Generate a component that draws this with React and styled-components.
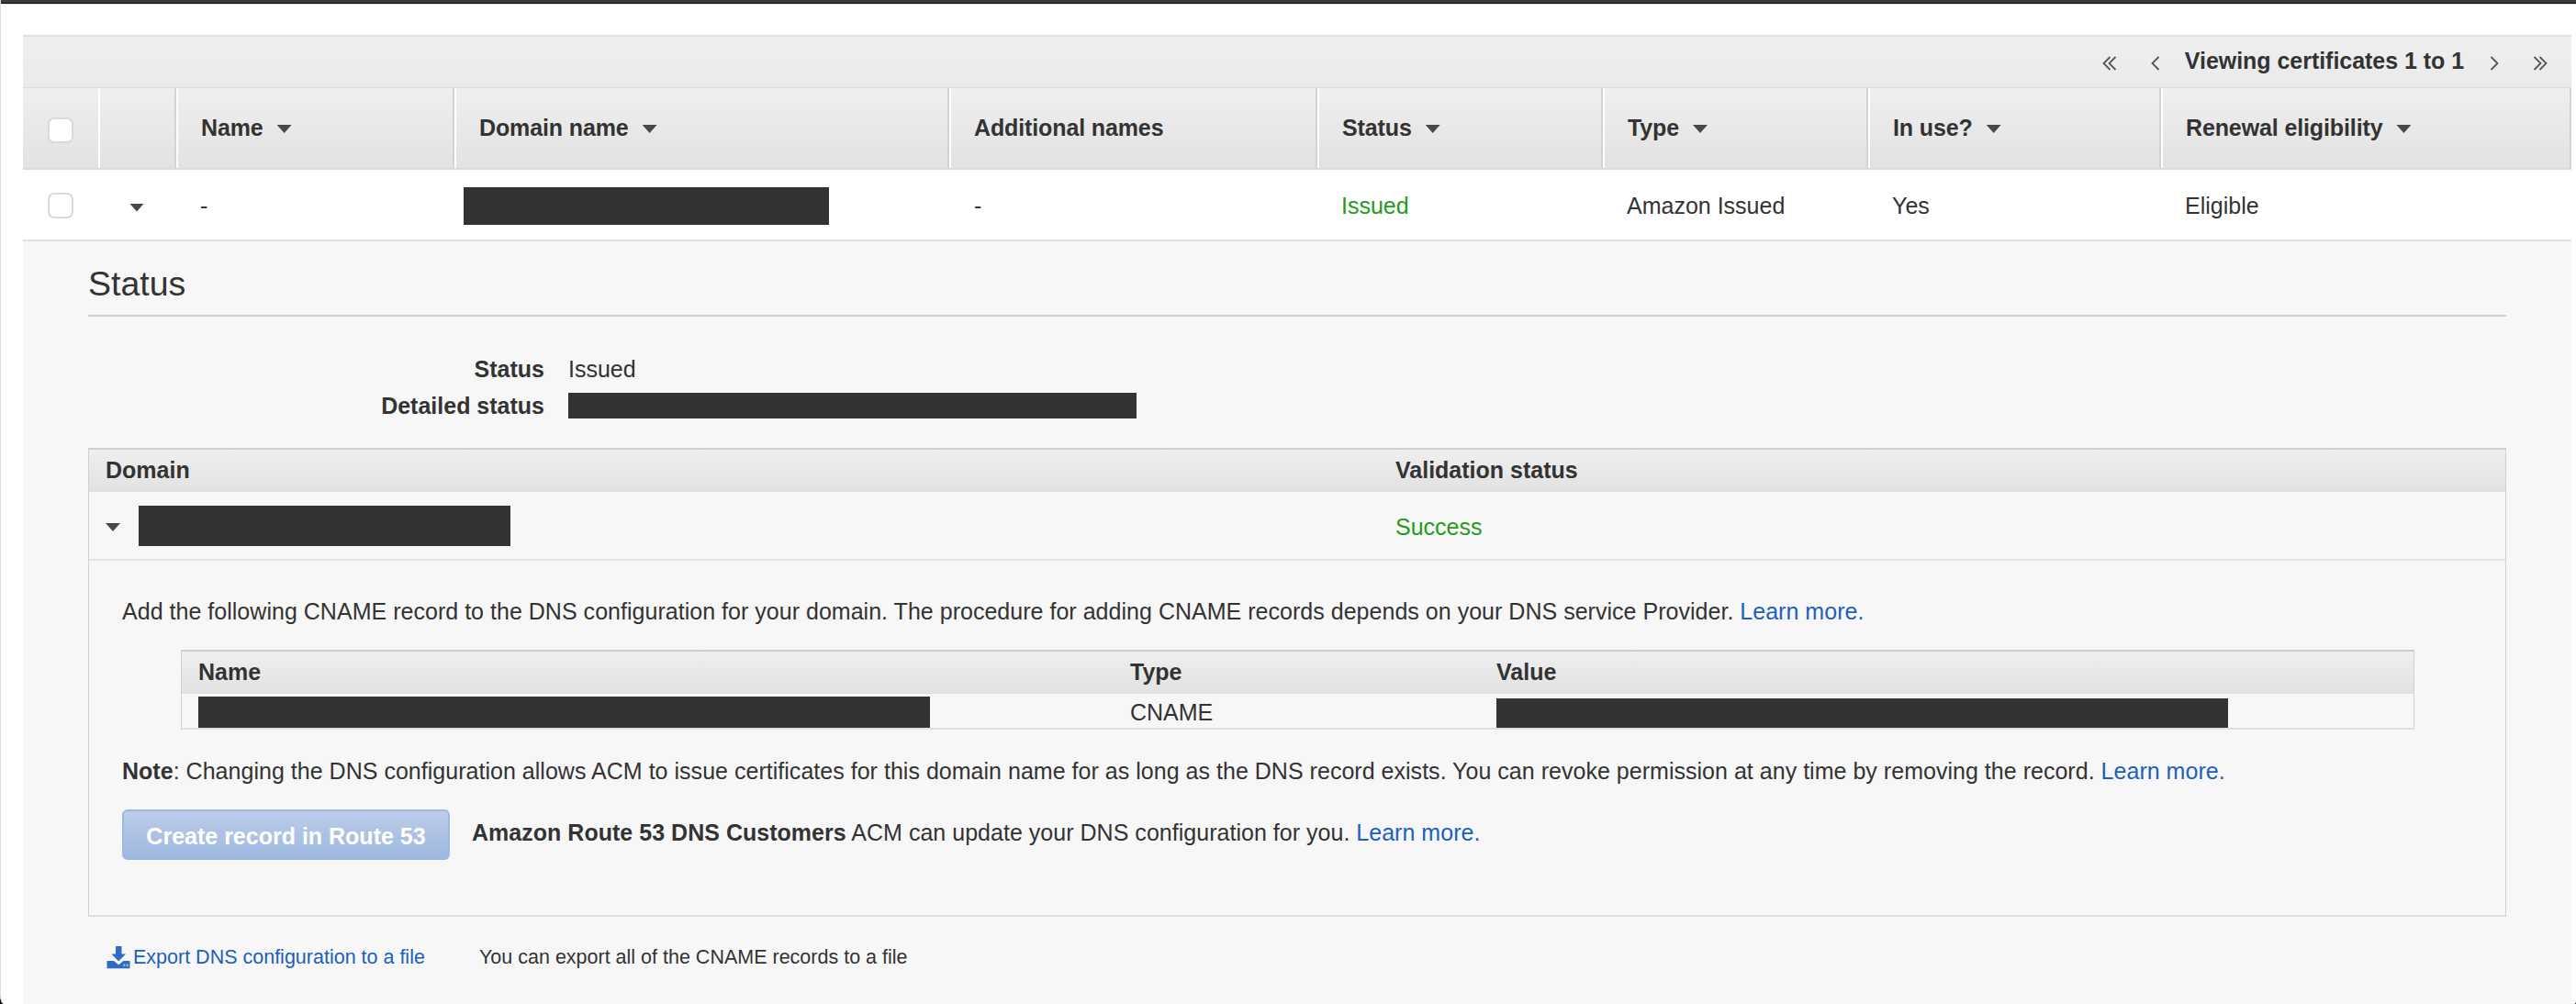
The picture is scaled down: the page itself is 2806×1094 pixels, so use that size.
import React from "react";
import styled, { createGlobalStyle } from "styled-components";

const GlobalStyle = createGlobalStyle`
  * { box-sizing: border-box; }
  body { margin: 0; background: #05070d; }
`;

const Page = styled.div`
  height: 1094px;
  overflow: hidden;
  display: flex;
  flex-direction: column;
  background: #fff;
  border-left: 1px solid #dcdcdc;
  border-radius: 0 0 2px 4px / 0 0 3px 9px;
  color: #333;
  font: 25px/40px "Liberation Sans", Arial, Helvetica, sans-serif;
`;

const WindowEdge = styled.div`
  flex: none;
  height: 5px;
  margin-left: -1px;
  background: linear-gradient(#3a3a3d 0 3px, #050505 3px 4px, #dedede 4px 5px);
`;

const Panel = styled.main`
  flex: 1;
  display: flex;
  flex-direction: column;
  margin: 33px 5px 0 24px;
`;

const Toolbar = styled.div`
  flex: none;
  height: 58px;
  display: flex;
  justify-content: flex-end;
  align-items: center;
  padding: 0 26px 3px 0;
  border-top: 2px solid #e0e0e0;
  border-bottom: 1px solid #dadada;
  background: linear-gradient(#efefef, #eaeaea);
`;

const PageButton = styled.button`
  display: flex;
  padding: 6px 0 0;
  margin: 0 0 0 ${(p) => p.$before || 0}px;
  border: 0;
  background: none;
  color: #555;
`;

const PageLabel = styled.strong`
  margin-left: 27px;
  letter-spacing: -0.04px;
`;

const GridRow = styled.div`
  flex: none;
  display: grid;
  grid-template-columns: 82px 85px 303px 539px 401px 311px 289px 319px 447px;
`;

const HeaderRow = styled(GridRow)`
  height: 89px;
  border-bottom: 2px solid #dadada;
  background: linear-gradient(#efefef, #e2e2e2);
  font-weight: 700;
  letter-spacing: -0.12px;
`;

const HeaderCell = styled.div`
  display: flex;
  align-items: center;
  gap: 15px;
  padding: 0 0 2px ${(p) => (p.$first ? 27 : 25)}px;
  border-left: ${(p) => (p.$first ? "0" : "2px solid #fff")};
  border-right: ${(p) => (p.$first ? "0" : "2px solid #d3d3d3")};
`;

const DataRow = styled(GridRow)`
  height: 78px;
  border-bottom: 2px solid #e0e0e0;
`;

const Cell = styled.div`
  display: flex;
  align-items: center;
  padding: 2px 0 0 ${(p) => p.$pad ?? 26}px;
  color: ${(p) => (p.$success ? "#269a1b" : "inherit")};
`;

const Checkbox = styled.span`
  width: 28px;
  height: 28px;
  margin-top: ${(p) => p.$drop || 0}px;
  border: 2px solid #d9d9d9;
  border-radius: 7px;
  background: #fff;
`;

const Caret = styled.span`
  flex: none;
  width: 16px;
  height: 9px;
  margin-top: 4px;
  background: #484848;
  clip-path: polygon(0 0, 100% 0, 50% 100%);
`;

const Redacted = styled.span`
  flex: none;
  display: block;
  width: ${(p) => p.$w}px;
  height: ${(p) => p.$h}px;
  background: #333;
`;

const Detail = styled.section`
  flex: 1;
  display: flex;
  flex-direction: column;
  padding: 0 71px;
  background: #f7f7f7;
`;

const Heading = styled.h2`
  flex: none;
  height: 82px;
  margin: 0;
  padding-top: 16px;
  border-bottom: 2px solid #d0d0d0;
  font-size: 37.5px;
  line-height: 60px;
  font-weight: 400;
`;

const Facts = styled.dl`
  flex: none;
  display: grid;
  grid-template-columns: 497px 1fr;
  grid-auto-rows: 40px;
  column-gap: 26px;
  align-items: center;
  height: 143px;
  margin: 0;
  padding-top: 37px;
`;

const Term = styled.dt`
  font-weight: 700;
  text-align: right;
`;

const Fact = styled.dd`
  display: flex;
  margin: 0;
`;

const Box = styled.div`
  flex: none;
  display: flex;
  flex-direction: column;
  height: ${(p) => p.$h}px;
  margin: ${(p) => p.$margin || 0};
  border: 1px solid #d0d0d0;
  border-top: 2px solid #cfcfcf;
  border-bottom: 2px solid #dfdfdf;
`;

const BoxRow = styled.div`
  flex: none;
  display: grid;
  grid-template-columns: ${(p) => p.$cols};
  grid-template-rows: 100%;
  height: ${(p) => p.$h}px;
  padding-left: 18px;
  border-bottom: ${(p) => (p.$rule ? "2px solid #e2e2e2" : "0")};
`;

const BoxHead = styled(BoxRow)`
  align-items: center;
  border-bottom: 1px solid #dedede;
  background: linear-gradient(#efefef, #e2e2e2);
  font-weight: 700;
  line-height: 38px;
  padding-bottom: 2px;
`;

const BoxCell = styled.div`
  display: flex;
  align-items: ${(p) => p.$align || "center"};
  gap: 20px;
  padding-top: ${(p) => p.$top || 0}px;
  line-height: 30px;
  color: ${(p) => (p.$success ? "#269a1b" : "inherit")};
`;

const Instructions = styled.div`
  display: flex;
  flex-direction: column;
  padding: 35px 99px 0 36px;
`;

const Paragraph = styled.p`
  margin: 0;
  white-space: nowrap;
  letter-spacing: 0.024px;
`;

const Link = styled.a`
  color: #1c60be;
`;

const Actions = styled.div`
  display: flex;
  align-items: flex-start;
  gap: 24px;
  margin-top: 22px;
`;

const PrimaryButton = styled.button`
  width: 357px;
  height: 55px;
  padding: 2px 0 0;
  border: 2px solid #9cb9e2;
  border-radius: 6px;
  background: linear-gradient(#bccde8, #9db8e0);
  color: #fff;
  font: 700 25px/40px "Liberation Sans", Arial, Helvetica, sans-serif;
`;

const ActionNote = styled(Paragraph)`
  padding-top: 5px;
`;

const Footer = styled.div`
  display: flex;
  align-items: center;
  height: 40px;
  margin-top: 24px;
  padding-left: 20px;
  font-size: 21.5px;
`;

const ExportLink = styled(Link)`
  width: 406px;
  display: flex;
  align-items: center;
  gap: 3px;
`;

const arrows = {
  first: { w: 16, d: "M8.5 1 1.5 8l7 7M14.5 1l-7 7 7 7" },
  prev: { w: 10, d: "M8.5 1 1.5 8l7 7" },
  next: { w: 10, d: "M1.5 1l7 7-7 7" },
  last: { w: 16, d: "M1.5 1l7 7-7 7M7.5 1l7 7-7 7" },
};

const Arrow = ({ name }) => (
  <svg width={arrows[name].w} height="16" fill="none" stroke="currentColor" strokeWidth="1.8">
    <path d={arrows[name].d} />
  </svg>
);

const DownloadIcon = () => (
  <svg width="26" height="25" viewBox="0 0 26 25" fill="#2f6cc2">
    <path d="M10 0h6.5v8.5H21L13.2 16.5 5.4 8.5H10z" />
    <path d="M.5 16H8l5.2 4.2L18.4 16h7.1v8.2H.5z" />
    <path fill="#a9c4ea" d="M18.6 19.5h1.7v2.5h-1.7zM21.8 19.5h1.7v2.5h-1.7z" />
  </svg>
);

const columns = [
  { label: "Name", sortable: true },
  { label: "Domain name", sortable: true },
  { label: "Additional names" },
  { label: "Status", sortable: true },
  { label: "Type", sortable: true },
  { label: "In use?", sortable: true },
  { label: "Renewal eligibility", sortable: true },
];

const domainCols = "1405px 1fr";
const recordCols = "1015px 399px 1fr";

export default function App() {
  return (
    <>
      <GlobalStyle />
      <Page>
        <WindowEdge />
        <Panel>
          <Toolbar>
            <PageButton><Arrow name="first" /></PageButton>
            <PageButton $before={37}><Arrow name="prev" /></PageButton>
            <PageLabel>Viewing certificates 1 to 1</PageLabel>
            <PageButton $before={28}><Arrow name="next" /></PageButton>
            <PageButton $before={37}><Arrow name="last" /></PageButton>
          </Toolbar>
          <HeaderRow>
            <HeaderCell $first><Checkbox $drop={6} /></HeaderCell>
            <HeaderCell />
            {columns.map((c) => (
              <HeaderCell key={c.label}>
                {c.label}
                {c.sortable && <Caret />}
              </HeaderCell>
            ))}
          </HeaderRow>
          <DataRow>
            <Cell $pad={27}><Checkbox /></Cell>
            <Cell $pad={34}><Caret /></Cell>
            <Cell>-</Cell>
            <Cell $pad={10}><Redacted $w={398} $h={41} /></Cell>
            <Cell $pad={27}>-</Cell>
            <Cell $success>Issued</Cell>
            <Cell>Amazon Issued</Cell>
            <Cell>Yes</Cell>
            <Cell>Eligible</Cell>
          </DataRow>
          <Detail>
            <Heading>Status</Heading>
            <Facts>
              <Term>Status</Term>
              <Fact>Issued</Fact>
              <Term>Detailed status</Term>
              <Fact><Redacted $w={619} $h={28} /></Fact>
            </Facts>
            <Box $h={511}>
              <BoxHead $cols={domainCols} $h={46}>
                <span>Domain</span>
                <span>Validation status</span>
              </BoxHead>
              <BoxRow $cols={domainCols} $h={75} $rule>
                <BoxCell><Caret /><Redacted $w={405} $h={44} /></BoxCell>
                <BoxCell $success $top={2}>Success</BoxCell>
              </BoxRow>
              <Instructions>
                <Paragraph>
                  Add the following CNAME record to the DNS configuration for your domain. The procedure for adding CNAME records depends on your DNS service Provider. <Link>Learn more.</Link>
                </Paragraph>
                <Box $h={87} $margin="22px 0 25px 64px">
                  <BoxHead $cols={recordCols} $h={46}>
                    <span>Name</span>
                    <span>Type</span>
                    <span>Value</span>
                  </BoxHead>
                  <BoxRow $cols={recordCols} $h={37}>
                    <BoxCell $align="flex-end"><Redacted $w={797} $h={34} /></BoxCell>
                    <BoxCell $top={2}>CNAME</BoxCell>
                    <BoxCell $align="flex-end"><Redacted $w={797} $h={32} /></BoxCell>
                  </BoxRow>
                </Box>
                <Paragraph>
                  <b>Note</b>: Changing the DNS configuration allows ACM to issue certificates for this domain name for as long as the DNS record exists. You can revoke permission at any time by removing the record. <Link>Learn more.</Link>
                </Paragraph>
                <Actions>
                  <PrimaryButton>Create record in Route 53</PrimaryButton>
                  <ActionNote>
                    <b>Amazon Route 53 DNS Customers</b> ACM can update your DNS configuration for you. <Link>Learn more.</Link>
                  </ActionNote>
                </Actions>
              </Instructions>
            </Box>
            <Footer>
              <ExportLink><DownloadIcon />Export DNS configuration to a file</ExportLink>
              <span>You can export all of the CNAME records to a file</span>
            </Footer>
          </Detail>
        </Panel>
      </Page>
    </>
  );
}
